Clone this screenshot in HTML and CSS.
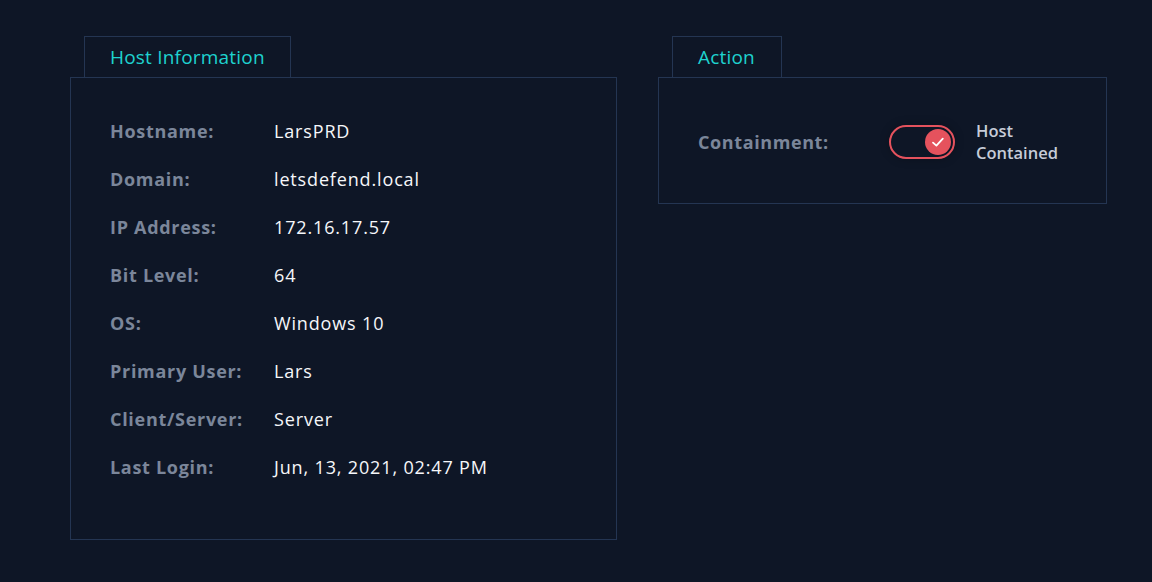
FILE: index.html
```html
<!DOCTYPE html>
<html>
<head>
<meta charset="utf-8">
<link rel="stylesheet" href="styles.css">
</head>
<body>
<div class="page">
  <section class="card card-host">
    <div class="tab">Host Information</div>
    <div class="panel host-panel">
      <div class="row"><span class="label">Hostname:</span><span class="value">LarsPRD</span></div>
      <div class="row"><span class="label">Domain:</span><span class="value">letsdefend.local</span></div>
      <div class="row"><span class="label">IP Address:</span><span class="value">172.16.17.57</span></div>
      <div class="row"><span class="label">Bit Level:</span><span class="value">64</span></div>
      <div class="row"><span class="label">OS:</span><span class="value">Windows 10</span></div>
      <div class="row"><span class="label">Primary User:</span><span class="value">Lars</span></div>
      <div class="row"><span class="label">Client/Server:</span><span class="value">Server</span></div>
      <div class="row"><span class="label">Last Login:</span><span class="value">Jun, 13, 2021, 02:47 PM</span></div>
    </div>
  </section>
  <section class="card card-action">
    <div class="tab tab-action">Action</div>
    <div class="panel action-panel">
      <span class="label action-label">Containment:</span>
      <div class="toggle">
        <div class="knob">
          <svg width="16" height="16" viewBox="0 0 16 16"><path d="M3 8.6 L6.4 11.6 L12.8 4.6" fill="none" stroke="#fff" stroke-width="1.8" stroke-linecap="round" stroke-linejoin="round"/></svg>
        </div>
      </div>
      <div class="status">Host<br>Contained</div>
    </div>
  </section>
</div>
</body>
</html>
```
FILE: styles.css
```css
html, body {
  margin: 0;
  padding: 0;
  background: #0e1626;
  height: 100%;
}
body {
  font-family: "Open Sans", "Noto Sans", sans-serif;
}
.page {
  display: flex;
  align-items: flex-start;
  gap: 41px;
  padding: 36px 0 0 70px;
}
.card-host { width: 547px; }
.card-action { width: 449px; }
.tab {
  margin-left: 14px;
  width: 207px;
  height: 41px;
  border: 1px solid #243552;
  border-bottom: none;
  box-sizing: border-box;
  padding-left: 25px;
  color: #1ed2cf;
  font-size: 19px;
  letter-spacing: 0.2px;
  line-height: 41px;
}
.tab-action {
  width: 110px;
  padding-left: 25px;
}
.panel {
  border: 1px solid #243552;
  box-sizing: border-box;
}
.host-panel {
  height: 463px;
  padding: 29px 0 0 39px;
}
.row {
  display: flex;
  height: 48px;
  align-items: center;
}
.label {
  width: 164px;
  flex: none;
  color: #7b869a;
  font-weight: 700;
  font-size: 18px;
  letter-spacing: 0.7px;
}
.value {
  color: #f6f7fa;
  font-size: 18px;
  letter-spacing: 0.85px;
}
.action-panel {
  height: 127px;
  display: flex;
  align-items: center;
  padding-left: 39px;
  padding-top: 3px;
}
.action-label {
  width: 191px;
  letter-spacing: 0.6px;
}
.toggle {
  width: 66px;
  height: 34px;
  box-sizing: border-box;
  border: 2px solid #e5525d;
  border-radius: 17px;
  display: flex;
  align-items: center;
  justify-content: flex-end;
  padding-right: 2px;
  box-shadow: 0 0 10px rgba(0,0,0,0.25);
}
.knob {
  width: 26px;
  height: 26px;
  border-radius: 50%;
  background: #e5525d;
  display: flex;
  align-items: center;
  justify-content: center;
}
.status {
  margin-left: 21px;
  color: #c6ccd8;
  font-weight: 600;
  font-size: 16.5px;
  line-height: 22px;
}
```
